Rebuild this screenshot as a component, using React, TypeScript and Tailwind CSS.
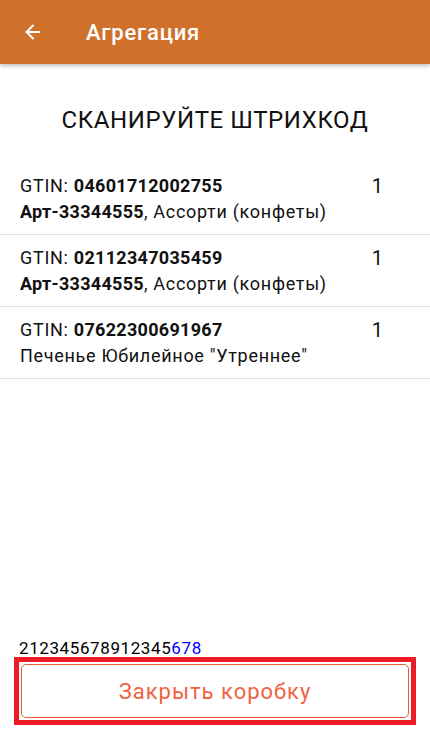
import { ArrowLeft } from 'lucide-react';

const items = [
  { gtin: '04601712002755', art: 'Арт-33344555', name: ', Ассорти (конфеты)', qty: 1 },
  { gtin: '02112347035459', art: 'Арт-33344555', name: ', Ассорти (конфеты)', qty: 1 },
  { gtin: '07622300691967', art: '', name: 'Печенье Юбилейное "Утреннее"', qty: 1 },
];

export default function App() {
  return (
    <div className="w-[430px] h-[737px] bg-white flex flex-col overflow-hidden font-['Roboto',sans-serif] text-[#111]">
      <header className="h-[64px] shrink-0 bg-[#d0712b] flex items-center text-white shadow-[0_2px_4px_rgba(0,0,0,0.25)] relative z-10">
        <div className="w-[64px] flex justify-center pl-[1px]">
          <ArrowLeft size={22} strokeWidth={2.2} />
        </div>
        <h1 className="ml-[22px] text-[22px] font-medium tracking-[0.8px]">Агрегация</h1>
      </header>

      <div className="flex-1 flex flex-col">
        <h2 className="text-center text-[24px] tracking-[0.6px] mt-[40px] mb-[27px] leading-[32px]">СКАНИРУЙТЕ ШТРИХКОД</h2>

        <ul>
          {items.map((it) => (
            <li key={it.gtin} className="h-[72px] border-b border-[#e2e2e2] flex pl-[20px] pr-[47px] pt-[10px]">
              <div className="flex-1 text-[18px] leading-[26px] tracking-[0.7px]">
                <div>
                  GTIN: <span className="font-bold tracking-[0.3px]">{it.gtin}</span>
                </div>
                <div>
                  {it.art && <span className="font-bold tracking-[0.3px]">{it.art}</span>}
                  {it.name}
                </div>
              </div>
              <div className="text-[20px] leading-[26px]">{it.qty}</div>
            </li>
          ))}
        </ul>

        <div className="mt-auto pl-[19px] text-[17px] tracking-[0.6px] leading-[17px] text-black">
          212345678912345<span className="text-[#0000ff]">678</span>
        </div>

        <div className="mx-[14px] mb-[12px] border-[5px] border-[#ed1c24] p-[2px]">
          <button className="w-full h-[54px] border border-[#f05a30] rounded-[5px] text-[#f26241] text-[22px] tracking-[1px]">
            Закрыть коробку
          </button>
        </div>
      </div>
    </div>
  );
}
